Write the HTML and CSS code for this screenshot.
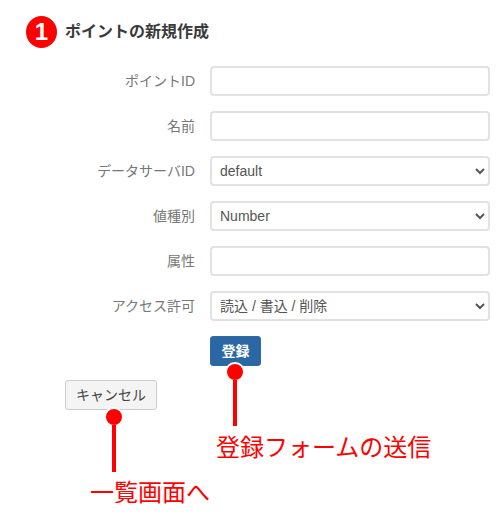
FILE: index.html
```html
<!DOCTYPE html>
<html lang="ja">
<head>
<meta charset="utf-8">
<title>ポイントの新規作成</title>
<link rel="stylesheet" href="styles.css">
</head>
<body>
<main class="page">
  <h1 class="title">ポイントの新規作成</h1>
  <form class="form">
    <div class="row"><label class="label">ポイントID</label><input class="control" type="text"></div>
    <div class="row"><label class="label">名前</label><input class="control" type="text"></div>
    <div class="row"><label class="label">データサーバID</label><select class="control"><option>default</option></select></div>
    <div class="row"><label class="label">値種別</label><select class="control"><option>Number</option></select></div>
    <div class="row"><label class="label">属性</label><input class="control" type="text"></div>
    <div class="row"><label class="label">アクセス許可</label><select class="control"><option>読込 / 書込 / 削除</option></select></div>
    <div class="row"><span class="label"></span><button class="btn primary" type="button">登録</button></div>
  </form>
  <button class="btn cancel" type="button">キャンセル</button>

  <span class="step">1</span>
  <span class="dot dot-save"></span><span class="stem stem-save"></span>
  <span class="note note-save">登録フォームの送信</span>
  <span class="dot dot-cancel"></span><span class="stem stem-cancel"></span>
  <span class="note note-cancel">一覧画面へ</span>
</main>
</body>
</html>
```
FILE: styles.css
```css
* { box-sizing: border-box; }
html, body { margin: 0; padding: 0; background: #fff; }
body { font-family: "Liberation Sans", "Noto Sans CJK JP", sans-serif; font-size: 14px; color: #333; }
.page { position: relative; width: 503px; height: 520px; padding: 22px 13px 0 65px; overflow: hidden; }
.title { margin: 0 0 24px; font-size: 16px; line-height: 20px; font-weight: 700; color: #3a3a3a; }
.form { display: flex; flex-direction: column; gap: 15px; }
.row { display: flex; align-items: center; gap: 15px; height: 30px; }
.label { width: 130px; flex: none; padding-bottom: 2px; text-align: right; font-weight: 400; color: #777; font-size: 14px; }
.control { flex: none; width: 280px; height: 30px; border: 2px solid #e2e2e2; border-radius: 4px; background: #fff; padding: 0 8px; font: inherit; color: #555; }
select.control { padding: 0 4px; }
.btn { height: 30px; border-radius: 3px; font: inherit; padding: 0 0 2px; }
.primary { width: 51px; background: #2b67a4; border: 1px solid #2e6da4; color: #fff; font-weight: 700; }
.cancel { display: block; width: 92px; margin-top: 14px; background: #f4f4f4; border: 1px solid #ccc; color: #444; }
.step { position: absolute; left: 26px; top: 16px; width: 31px; height: 32px; border-radius: 50%; background: #f00; color: #fff; font-size: 24px; line-height: 32px; font-weight: 700; text-align: center; }
.dot { position: absolute; width: 20px; height: 20px; border-radius: 50%; background: #f00; border: 2px solid #fff; }
.dot-save { left: 225px; top: 362px; }
.dot-cancel { left: 104px; top: 407px; }
.stem { position: absolute; width: 4px; background: #f00; }
.stem-save { left: 233px; top: 380px; height: 46px; }
.stem-cancel { left: 112px; top: 425px; height: 47px; }
.note { position: absolute; color: #f00; font-size: 24px; line-height: 30px; white-space: nowrap; }
.note-save { left: 216px; top: 433px; }
.note-cancel { left: 90px; top: 478px; }
```
